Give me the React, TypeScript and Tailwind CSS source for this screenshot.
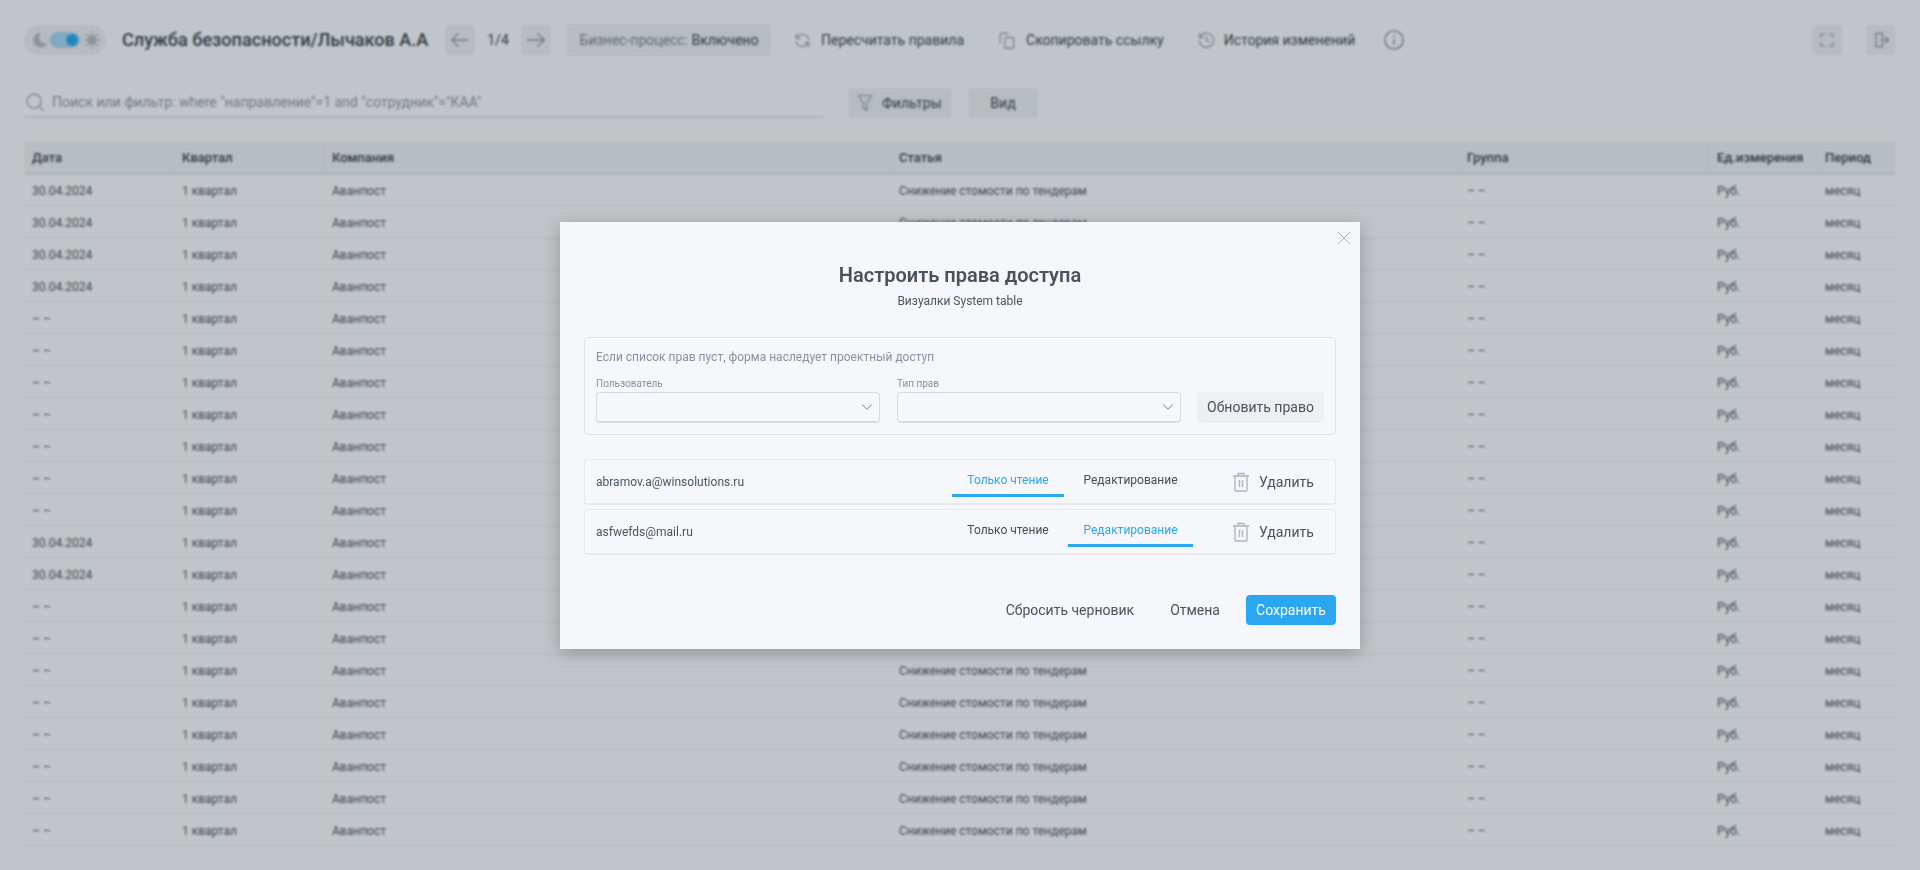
import React from "react";

const dates = [1,1,1,1,0,0,0,0,0,0,0,1,1,0,0,0,0,0,0,0,0];

const Ic = ({ w = 20, children, className = "" }: { w?: number; children: React.ReactNode; className?: string }) => (
  <svg width={w} height={w} viewBox="0 0 24 24" fill="none" stroke="currentColor" strokeWidth="1.4" strokeLinecap="round" strokeLinejoin="round" className={className}>{children}</svg>
);

function Header() {
  return (
    <div className="flex items-center h-[32px] pl-[24px] pr-[24px] mt-[24px] text-[#3f4a54]">
      <div className="flex items-center w-[82px] h-[30px] rounded-full bg-[#e8eaee] pl-[6px] shrink-0">
        <svg width="20" height="20" viewBox="0 0 24 24" className="text-[#b5b9c2] shrink-0"><path d="M13 3a9 9 0 1 0 8 13 8 8 0 0 1-8-13z" fill="currentColor" /></svg>
        <div className="w-[30px] h-[16px] rounded-full bg-[#a3d3f3] flex items-center justify-end pr-[2px] shrink-0">
          <div className="w-[12px] h-[12px] rounded-full bg-[#2aa7ee]" />
        </div>
        <svg width="20" height="20" viewBox="0 0 24 24" stroke="#b5b9c2" strokeWidth="2" className="ml-[2px] shrink-0"><circle cx="12" cy="12" r="5" fill="#b5b9c2" /><path d="M12 2v3M12 19v3M2 12h3M19 12h3M5 5l2 2M17 17l2 2M5 19l2-2M17 7l2-2" /></svg>
      </div>
      <div className="ml-[16px] w-[323px] text-[18.1px] font-medium whitespace-nowrap text-[#3e4a55]">Служба безопасности/Лычаков А.А</div>
      <div className="w-[30px] h-[30px] rounded-[4px] bg-[#e9ebef] flex items-center justify-center text-[#8f95a3]">
        <Ic w={22}><path d="M21 12H3M10 5l-7 7 7 7" /></Ic>
      </div>
      <div className="w-[46px] text-center text-[14px] text-[#3e4a55]">1/4</div>
      <div className="w-[30px] h-[30px] rounded-[4px] bg-[#e9ebef] flex items-center justify-center text-[#8f95a3]">
        <Ic w={22}><path d="M3 12h18M14 5l7 7-7 7" /></Ic>
      </div>
      <div className="ml-[16px] w-[204px] h-[32px] rounded-[4px] bg-[#e9ebef] flex items-center justify-center text-[14px] whitespace-nowrap">
        <span className="text-[#7f8596]">Бизнес-процесс:&nbsp;</span><span className="text-[#3e4a55]">Включено</span>
      </div>
      <div className="ml-[22px] flex items-center gap-[9px] text-[14px] text-[#3e4a55] whitespace-nowrap">
        <Ic w={19} className="text-[#8f95a3]"><path d="M20 11a8 8 0 0 0-14-4L4 9M4 4v5h5M4 13a8 8 0 0 0 14 4l2-2M20 20v-5h-5" /></Ic>
        Пересчитать правила
      </div>
      <div className="ml-[33px] flex items-center gap-[10px] text-[14px] text-[#3e4a55] whitespace-nowrap">
        <Ic w={19} className="text-[#8f95a3]"><path d="M4 15V4a1 1 0 0 1 1-1h9" /><rect x="10" y="8" width="11" height="14" rx="1" /></Ic>
        Скопировать ссылку
      </div>
      <div className="ml-[33px] flex items-center gap-[8px] text-[14px] text-[#3e4a55] whitespace-nowrap">
        <Ic w={19} className="text-[#8f95a3]"><path d="M3 12a9 9 0 1 0 3-7L3 8M3 3v5h5M12 7v5l3 2" /></Ic>
        История изменений
      </div>
      <div className="ml-[28px] text-[#7f8596]">
        <Ic w={22}><circle cx="12" cy="12" r="10" /><path d="M12 11v6M12 7v.5" /></Ic>
      </div>
      <div className="ml-auto flex gap-[24px]">
        <div className="w-[30px] h-[30px] rounded-[4px] bg-[#e9ebef] flex items-center justify-center text-[#8f95a3]">
          <Ic w={18}><path d="M4 9V4h5M15 4h5v5M20 15v5h-5M9 20H4v-5" /></Ic>
        </div>
        <div className="w-[30px] h-[30px] rounded-[4px] bg-[#e9ebef] flex items-center justify-center text-[#8f95a3]">
          <Ic w={20}><path d="M14 4H6v16h8M14 4v16M11 12h10M18 9l3 3-3 3" /></Ic>
        </div>
      </div>
    </div>
  );
}

function Search() {
  return (
    <div className="flex items-center mt-[32px] pl-[24px]">
      <div className="w-[800px] h-[30px] border-b-2 border-[#dcdfe5] flex items-center">
        <Ic w={20} className="text-[#8f95a3] ml-[1px]"><circle cx="11" cy="11" r="8.5" /><path d="M17.5 17.5 22 22" /></Ic>
        <span className="ml-[7px] text-[14px] text-[#9498a8]">Поиск или фильтр: where "направление"=1 and "сотрудник"="КАА"</span>
      </div>
      <div className="ml-[24px] w-[104px] h-[30px] rounded-[4px] bg-[#e9ebef] flex items-center pl-[7px] gap-[7px] text-[14px] text-[#3e4a55]">
        <Ic w={20} className="text-[#8f95a3]"><path d="M4 3h16l-6 9v9l-4-3v-6z" /></Ic>
        Фильтры
      </div>
      <div className="ml-[16px] w-[70px] h-[30px] rounded-[4px] bg-[#e9ebef] flex items-center justify-center text-[14px] text-[#3e4a55]">Вид</div>
    </div>
  );
}

const cols = "grid grid-cols-[150px_150px_567px_568px_250px_108px_79px]";

function Table() {
  return (
    <div className="mt-[24px] mx-[24px]">
      <div className={`${cols} h-[33px] bg-[#eaecf0] border-b-2 border-[#dcdfe5] text-[13px] font-medium text-[#3e4a55]`}>
        {["Дата","Квартал","Компания","Статья","Группа","Ед.измерения","Период"].map((h) => (
          <div key={h} className="px-[8px] pt-[1px] whitespace-nowrap flex items-center border-r border-[#e5e7eb] last:border-r-0">{h}</div>
        ))}
      </div>
      {dates.map((d, i) => (
        <div key={i} className={`${cols} h-[32px] items-center border-b border-[#dcdfe5] text-[12px] text-[#4f5a65]`}>
          <div className="px-[8px]">{d ? "30.04.2024" : "– –"}</div>
          <div className="px-[8px]">1 квартал</div>
          <div className="px-[8px]">Аванпост</div>
          <div className="px-[8px]">Снижение стомости по тендерам</div>
          <div className="px-[8px]">– –</div>
          <div className="px-[8px]">Руб.</div>
          <div className="px-[8px]">месяц</div>
        </div>
      ))}
    </div>
  );
}

function Select({ label, className = "" }: { label: string; className?: string }) {
  return (
    <div className={`w-[284px] ${className}`}>
      <div className="text-[10px] leading-[12px] text-[#8a8fa3] mb-[2px]">{label}</div>
      <div className="h-[31px] rounded-[4px] border border-[#d8dbe1] border-b-2 flex items-center justify-end pr-[5px] text-[#5b6270]">
        <Ic w={14}><path d="M4 8l8 8 8-8" /></Ic>
      </div>
    </div>
  );
}

function Row({ email, active }: { email: string; active: number }) {
  const on = "text-[#2aa7ee] border-[#2aa7ee]";
  const off = "text-[#444e58] border-transparent";
  return (
    <div className="h-[46px] rounded-[4px] border border-[#e8eaee] border-b-2 flex items-start pl-[11px] text-[#4a5560]">
      <div className="w-[356px] text-[12px] leading-[44px]">{email}</div>
      <div className={`w-[112px] h-[37px] pt-[10px] text-center text-[12px] leading-[20px] border-b-[3px] ${active === 0 ? on : off}`}>Только чтение</div>
      <div className={`ml-[4px] w-[125px] h-[37px] pt-[10px] text-center text-[12px] leading-[20px] border-b-[3px] ${active === 1 ? on : off}`}>Редактирование</div>
      <div className="ml-[39px] mt-[12px] flex items-center gap-[9px] text-[14px] leading-[20px] text-[#4a525c]">
        <svg width="18" height="20" viewBox="0 0 18 20" fill="none" stroke="#aeb2c0" strokeWidth="1.3"><path d="M1 4h16M6 4V1.5h6V4M3 4v14a1 1 0 0 0 1 1h10a1 1 0 0 0 1-1V4M7.5 8v7M10.5 8v7" /></svg>
        Удалить
      </div>
    </div>
  );
}

function Modal() {
  return (
    <div className="absolute left-[560px] top-[222px] w-[800px] h-[427px] bg-[#f5f7fa] shadow-[0_4px_16px_rgba(0,0,0,0.25)] px-[24px] flex flex-col">
      <div className="absolute right-[8px] top-[8px] text-[#a9adb8]">
        <Ic w={16} ><path d="M3 3l18 18M21 3 3 21" /></Ic>
      </div>
      <div className="mt-[40px] text-center text-[20px] leading-[26px] font-semibold text-[#4a525c]">Настроить права доступа</div>
      <div className="mt-[4px] text-center text-[12px] leading-[18px] text-[#4a5560]">Визуалки System table</div>
      <div className="mt-[27px] h-[98px] rounded-[4px] border border-[#e1e3e8] px-[11px] pt-[11px]">
        <div className="text-[12px] leading-[16px] text-[#8a8fa3]">Если список прав пуст, форма наследует проектный доступ</div>
        <div className="mt-[13px] flex items-end">
          <Select label="Пользователь" />
          <Select label="Тип прав" className="ml-[17px]" />
          <div className="ml-[16px] w-[127px] h-[31px] rounded-[4px] bg-[#eeeff2] flex items-center justify-center text-[14px] text-[#4a525c] whitespace-nowrap">Обновить право</div>
        </div>
      </div>
      <div className="mt-[24px] flex flex-col gap-[4px]">
        <Row email="abramov.a@winsolutions.ru" active={0} />
        <Row email="asfwefds@mail.ru" active={1} />
      </div>
      <div className="mt-[40px] flex items-center justify-end text-[14px] text-[#4a525c]">
        <span>Сбросить черновик</span>
        <span className="ml-[36px]">Отмена</span>
        <div className="ml-[26px] w-[90px] h-[30px] rounded-[4px] bg-[#2aa7ee] text-white flex items-center justify-center">Сохранить</div>
      </div>
    </div>
  );
}

export default function App() {
  return (
    <div className="relative w-full h-[870px] overflow-hidden bg-[#f5f7fa] font-['Roboto',sans-serif]">
      <Header />
      <Search />
      <Table />
      <div className="absolute inset-0 bg-[rgba(2,14,17,0.21)] backdrop-blur-[1px]" />
      <Modal />
    </div>
  );
}
